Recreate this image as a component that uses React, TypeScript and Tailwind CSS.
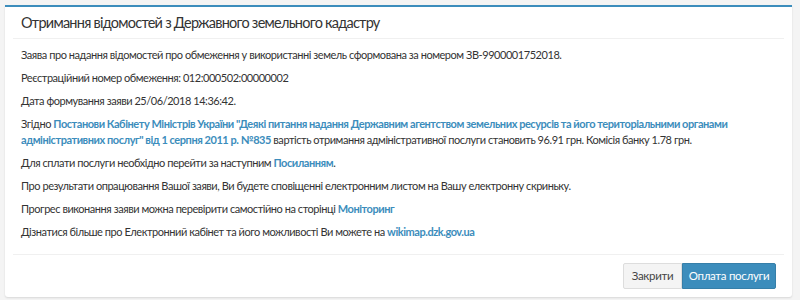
import React from 'react';

const link = 'text-[#3c8dbc] font-bold';

export default function App() {
  return (
    <div className="h-[300px] overflow-hidden bg-[#f4f4f4] pl-[5px] pr-[8px] pt-[5px] font-['Lato',sans-serif] text-[#333]">
      <div className="h-[292px] bg-white border-t-2 border-[#3c8dbc] rounded-b-[3px] shadow-[0_1px_2px_rgba(0,0,0,0.12)] flex flex-col">
        {/* Header */}
        <div className="shrink-0 mx-[8px] h-[32px] border-b border-[#f0f0f0] px-[8px] flex items-center">
          <h4 className="text-[14.5px] leading-[20px] tracking-[-0.75px] text-[#333]">Отримання відомостей з Державного земельного кадастру</h4>
        </div>

        {/* Body */}
        <div className="shrink-0 mx-[8px] px-[8px] pt-[8px] pb-[14px] border-b border-[#f0f0f0] text-[11px] leading-[16px] tracking-[-0.45px] flex flex-col gap-[7px]">
          <p>Заява про надання відомостей про обмеження у використанні земель сформована за номером ЗВ-9900001752018.</p>
          <p>Реєстраційний номер обмеження: 012:000502:00000002</p>
          <p>Дата формування заяви 25/06/2018 14:36:42.</p>
          <p>
            Згідно{' '}
            <a className={link}>
              Постанови Кабінету Міністрів України "Деякі питання надання Державним агентством земельних ресурсів та його територіальними органами адміністративних послуг" від 1 серпня 2011 р. №835
            </a>{' '}
            вартість отримання адміністративної послуги становить 96.91 грн. Комісія банку 1.78 грн.
          </p>
          <p>
            Для сплати послуги необхідно перейти за наступним <a className={link}>Посиланням</a>.
          </p>
          <p>Про результати опрацювання Вашої заяви, Ви будете сповіщенні електронним листом на Вашу електронну скриньку.</p>
          <p>
            Прогрес виконання заяви можна перевірити самостійно на сторінці <a className={link}>Моніторинг</a>
          </p>
          <p>
            Дізнатися більше про Електронний кабінет та його можливості Ви можете на <a className={link}>wikimap.dzk.gov.ua</a>
          </p>
        </div>

        {/* Footer */}
        <div className="shrink-0 mx-[8px] px-[8px] pt-[8px] flex justify-end">
          <button className="w-[59px] h-[26px] text-[11.5px] tracking-[-0.3px] bg-[#f4f4f4] border border-[#ddd] rounded-l-[2px] text-[#444]">Закрити</button>
          <button className="w-[94px] h-[26px] text-[11.5px] tracking-[-0.3px] bg-[#3c8dbc] border border-[#367fa9] rounded-r-[2px] text-white">Оплата послуги</button>
        </div>
      </div>
    </div>
  );
}
